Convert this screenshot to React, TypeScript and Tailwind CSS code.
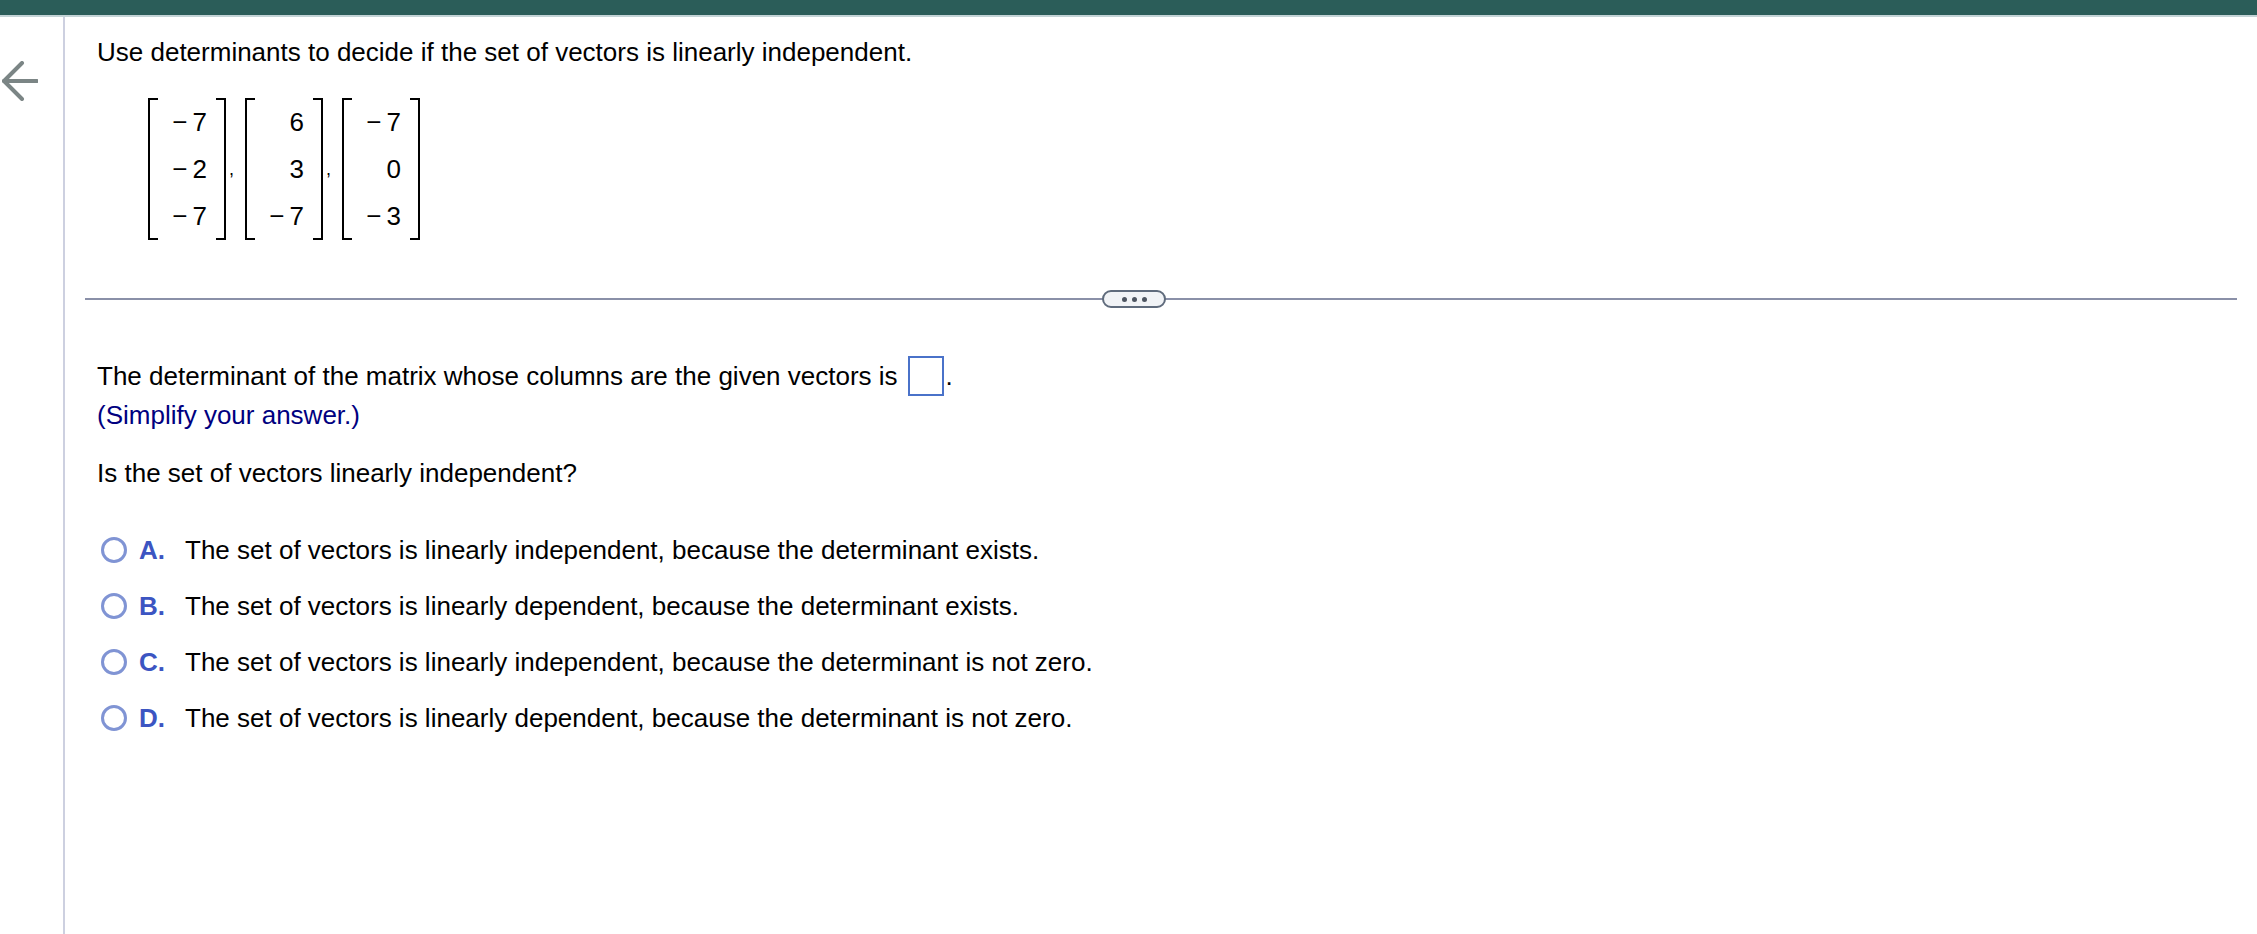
const options = [
  { letter: "A.", text: "The set of vectors is linearly independent, because the determinant exists." },
  { letter: "B.", text: "The set of vectors is linearly dependent, because the determinant exists." },
  { letter: "C.", text: "The set of vectors is linearly independent, because the determinant is not zero." },
  { letter: "D.", text: "The set of vectors is linearly dependent, because the determinant is not zero." },
];

const vectors = [
  ["−\u20097", "−\u20092", "−\u20097"],
  ["6", "3", "−\u20097"],
  ["−\u20097", "0", "−\u20093"],
];

function Vector({ rows }: { rows: string[] }) {
  return (
    <div className="flex h-[142px] w-[78px]">
      <div className="w-[10px] border-y-[2px] border-l-[2px] border-black" />
      <div className="flex flex-1 flex-col justify-center pr-[9px] text-right leading-[47px]">
        {rows.map((value, index) => (
          <div key={index} className="h-[47px]">{value}</div>
        ))}
      </div>
      <div className="w-[10px] border-y-[2px] border-r-[2px] border-black" />
    </div>
  );
}

export default function App() {
  return (
    <div className="flex h-screen flex-col overflow-hidden bg-white font-['Liberation_Sans',Arial,sans-serif] text-[26px] text-black">
      <div className="h-[17px] shrink-0 border-b-[2px] border-[#c3d3d6] bg-[#2b5d59]" />
      <div className="flex flex-1">
        <div className="w-[65px] shrink-0 border-r-[2px] border-[#cdd0e0] pl-[2px] pt-[44px]">
          <svg width="36" height="40" viewBox="0 0 36 40" fill="none" stroke="#7b8585" strokeWidth="4" strokeLinecap="round" strokeLinejoin="round">
            <path d="M35 20H2" />
            <path d="M20 2 2 20l18 18" />
          </svg>
        </div>
        <div className="flex-1 pl-[20px] pr-[20px]">
          <div className="pl-[12px] pt-[20px]">
            <p className="leading-[30px]">Use determinants to decide if the set of vectors is linearly independent.</p>
            <div className="mt-[31px] flex pl-[51px]">
              {vectors.map((rows, index) => (
                <div key={index} className="flex">
                  <Vector rows={rows} />
                  {index < 2 && <span className="w-[19px] pl-[3px] pt-[58px] text-[18px]">,</span>}
                </div>
              ))}
            </div>
          </div>

          <div className="relative mt-[58px] h-[2px] bg-[#8a90a8]">
            <div className="absolute left-[1017px] top-[-8px] flex h-[18px] w-[64px] items-center justify-center gap-[5px] rounded-full border-[2px] border-[#5f6b7c] bg-[#f1f3f6]">
              <span className="h-[5px] w-[5px] rounded-full bg-[#4d5561]" />
              <span className="h-[5px] w-[5px] rounded-full bg-[#4d5561]" />
              <span className="h-[5px] w-[5px] rounded-full bg-[#4d5561]" />
            </div>
          </div>

          <div className="pl-[12px]">
            <div className="mt-[56px] flex h-[40px] items-center">
              <span>The determinant of the matrix whose columns are the given vectors is</span>
              <span className="ml-[10px] h-[40px] w-[36px] border-[2px] border-[#4a72c9]" />
              <span className="ml-[2px]">.</span>
            </div>
            <p className="mt-[2px] leading-[34px] text-[#000080]">(Simplify your answer.)</p>
            <p className="mt-[24px] leading-[34px]">Is the set of vectors linearly independent?</p>
            <div className="mt-[45px] flex flex-col gap-[26px]">
              {options.map((option) => (
                <div key={option.letter} className="flex h-[30px] items-center">
                  <span className="ml-[4px] h-[26px] w-[26px] shrink-0 rounded-full border-[3px] border-[#8094d4]" />
                  <span className="ml-[12px] w-[46px] shrink-0 font-bold text-[#3c55c2]">{option.letter}</span>
                  <span>{option.text}</span>
                </div>
              ))}
            </div>
          </div>
        </div>
      </div>
    </div>
  );
}
